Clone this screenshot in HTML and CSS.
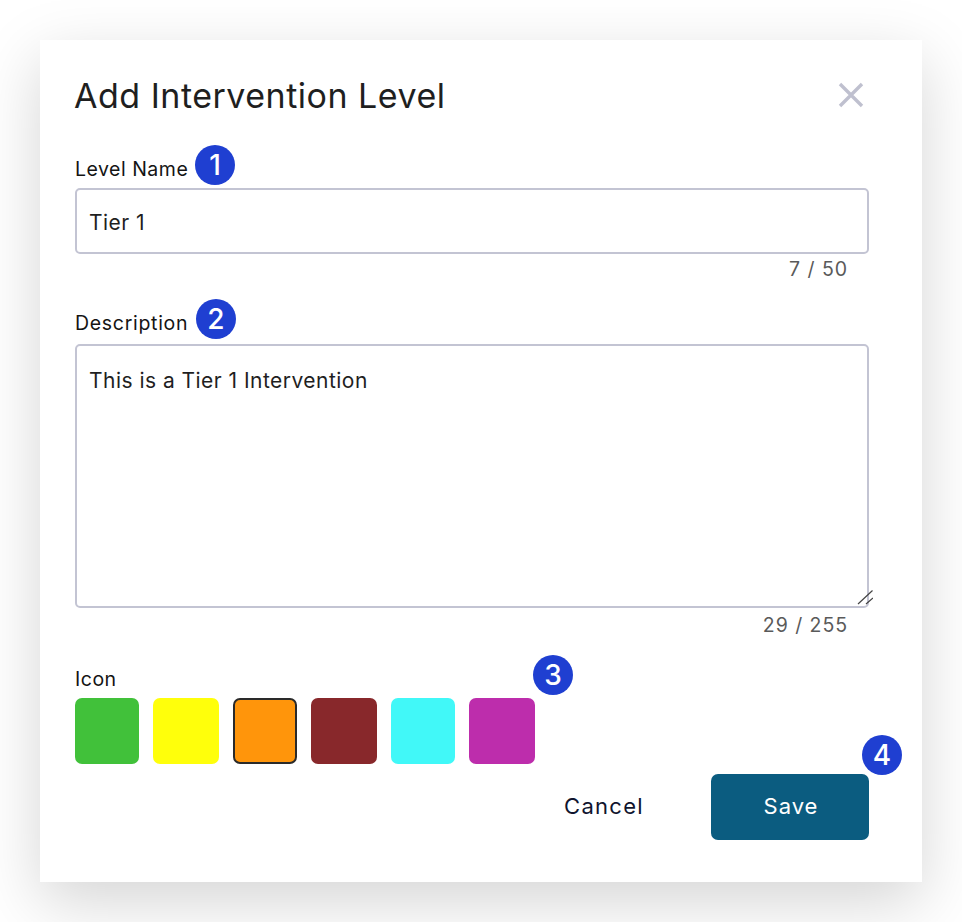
FILE: index.html
```html
<!DOCTYPE html>
<html lang="en">
<head>
    <meta charset="UTF-8">
    <meta name="viewport" content="width=device-width, initial-scale=1.0">
    <title>Add Intervention Level</title>
    <link rel="stylesheet" href="styles.css">
</head>
<body>
    <div class="modal">
        <div class="modal-head">
            <h1>Add Intervention Level</h1>
            <button class="close" aria-label="Close">
                <svg width="26" height="26" viewBox="0 0 26 26"><path d="M2 2 L24 24 M24 2 L2 24" stroke="#bfc0cf" stroke-width="3.4" fill="none"/></svg>
            </button>
        </div>

        <div class="field field-name">
            <label for="levelName">Level Name</label>
            <input type="text" id="levelName" value="Tier 1">
            <div class="count">7 / 50</div>
            <span class="badge badge-1">1</span>
        </div>

        <div class="field field-desc">
            <label for="description">Description</label>
            <textarea id="description">This is a Tier 1 Intervention</textarea>
            <svg class="grip" width="18" height="18" viewBox="0 0 18 18"><path d="M3 15 L17.5 1.5 M11 15 L18 9" stroke="#444" stroke-width="1.2" fill="none"/></svg>
            <div class="count">29 / 255</div>
            <span class="badge badge-2">2</span>
        </div>

        <div class="icons">
            <div class="icons-label">Icon</div>
            <div class="swatches">
                <div class="swatch green"></div>
                <div class="swatch yellow wide"></div>
                <div class="swatch orange selected"></div>
                <div class="swatch maroon wide"></div>
                <div class="swatch cyan"></div>
                <div class="swatch purple wide"></div>
            </div>
            <span class="badge badge-3">3</span>
        </div>

        <div class="actions">
            <button class="cancel">Cancel</button>
            <button class="save">Save</button>
            <span class="badge badge-4">4</span>
        </div>
    </div>
</body>
</html>
```

FILE: styles.css
```css
* {
    box-sizing: border-box;
}
body {
    margin: 0;
    background-color: #fff;
    font-family: Inter, "Liberation Sans", sans-serif;
    color: #1a1a1a;
}
.modal {
    width: 882px;
    height: 842px;
    margin: 40px;
    padding: 0 53px 0 35px;
    background-color: #fff;
    box-shadow: 0 20px 60px rgba(0, 0, 0, 0.17);
}
.modal-head {
    display: flex;
    justify-content: space-between;
    align-items: center;
    height: 112px;
    padding-bottom: 2px;
}
h1 {
    margin: 0 0 0 -1px;
    font-size: 34px;
    font-weight: 400;
    letter-spacing: 0.5px;
    color: #1f1f1f;
}
.close {
    width: 26px;
    height: 26px;
    margin-right: 5px;
    padding: 0;
    border: none;
    background: none;
    display: flex;
}
.field {
    position: relative;
}
label,
.icons-label {
    display: block;
    height: 36px;
    font-size: 19.5px;
    line-height: 34px;
    letter-spacing: 0.5px;
    color: #141414;
}
.field-desc label {
    line-height: 30px;
    letter-spacing: 0.7px;
}
input[type="text"],
textarea {
    display: block;
    width: 100%;
    padding: 0 12px;
    border: 2px solid #c3c4d3;
    border-radius: 5px;
    font-family: inherit;
    font-size: 21px;
    letter-spacing: 0.47px;
    color: #1f1f1f;
    background-color: #fff;
    outline: none;
}
input[type="text"] {
    height: 66px;
    padding-top: 3px;
}
textarea {
    height: 264px;
    padding-top: 21px;
    line-height: 28px;
    resize: none;
}
.count {
    height: 30px;
    padding-right: 21px;
    text-align: right;
    font-size: 19.5px;
    line-height: 30px;
    letter-spacing: 0.95px;
    color: #5a5a5a;
}
.field-desc .count {
    line-height: 34px;
}
.field-name {
    height: 156px;
}
.field-desc {
    height: 354px;
}
.grip {
    position: absolute;
    right: -4px;
    top: 281px;
}
.badge {
    position: absolute;
    width: 40px;
    height: 40px;
    border-radius: 50%;
    background-color: #1f3fd1;
    color: #fff;
    font-size: 28px;
    font-weight: 500;
    line-height: 40px;
    text-align: center;
}
.badge-1 {
    left: 120px;
    top: -7px;
}
.badge-2 {
    left: 121px;
    top: -9px;
}
.badge-3 {
    left: 458px;
    top: -7px;
}
.badge-4 {
    right: -33px;
    top: -39px;
}
.icons {
    position: relative;
    height: 112px;
}
.swatches {
    display: flex;
    gap: 14px;
}
.swatch {
    width: 64px;
    height: 66px;
    border-radius: 7px;
}
.swatch.wide {
    width: 66px;
}
.green { background-color: #41c13a; }
.yellow { background-color: #ffff0b; }
.orange { background-color: #ff950b; }
.maroon { background-color: #88282b; }
.cyan { background-color: #41f8f8; }
.purple { background-color: #bd2dac; }
.selected {
    border: 2px solid #2a2a2a;
}
.actions {
    position: relative;
    display: flex;
    justify-content: flex-end;
    align-items: center;
    gap: 67px;
}
.actions button {
    font-family: inherit;
    font-size: 22px;
    letter-spacing: 1.3px;
    border: none;
    cursor: pointer;
    padding: 0 0 3px;
}
.cancel {
    background: none;
    color: #10142e;
}
.actions .save {
    width: 158px;
    height: 66px;
    padding-left: 2px;
    letter-spacing: 1px;
    border-radius: 7px;
    background-color: #0b5c80;
    color: #fff;
}
```
